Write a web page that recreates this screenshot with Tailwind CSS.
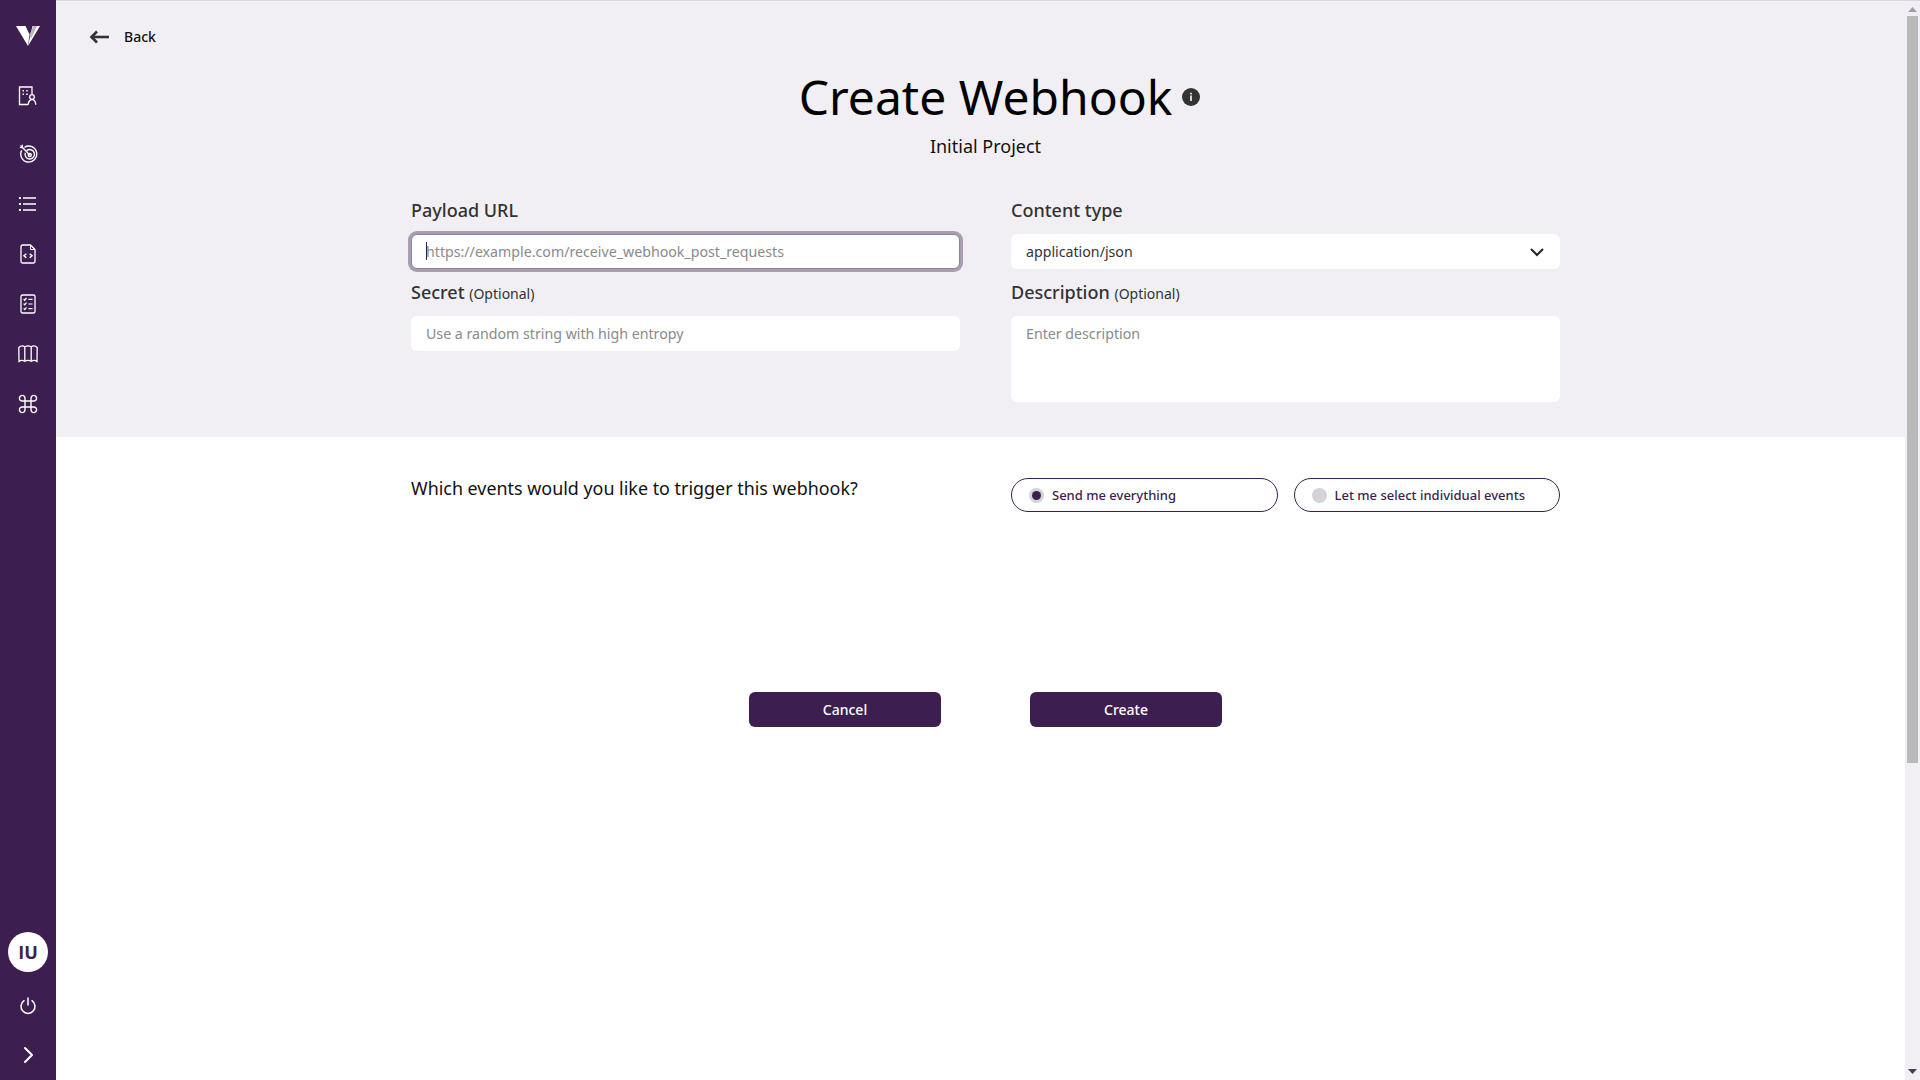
<!DOCTYPE html>
<html lang="en">
<head>
  <meta charset="UTF-8" />
  <title>Create Webhook</title>
  <script src="https://cdn.jsdelivr.net/npm/@tailwindcss/browser@4"></script>
</head>
<body class="h-screen overflow-hidden bg-white font-['Noto_Sans',sans-serif] text-[#111]">
  <div class="flex h-[1080px]">

    <!-- Sidebar -->
    <aside class="w-14 shrink-0 bg-[#3c1f50] flex flex-col items-center text-white">
      <svg class="mt-[26px] w-6 h-5" viewBox="0 0 24 20">
        <path d="M0 0H9.500L13.500 8.500L12 20Z" fill="#fff" />
        <path d="M12 20L16.500 0H24Z" fill="#fff" />
        <path d="M13.500 8.500L17.500 0H21L15.200 12.500Z" fill="#b9b4bc" />
      </svg>
      <nav class="mt-[25px] flex flex-col items-center">
        <!-- org -->
        <a class="h-[50px] flex items-center justify-center">
          <svg class="w-5 h-5" viewBox="0 0 20 20" fill="none" stroke="currentColor" stroke-width="1.300">
            <path d="M10 18.500H1.500V1H14V8" />
            <path d="M4.500 4.800h1.500M8.200 4.800h1.500M4.500 8.200h1.500M8.200 8.200h1.500" stroke-width="1.600" />
            <circle cx="14" cy="11" r="2.300" />
            <path d="M10.300 18.800c0-3.200 1.500-5.200 3.700-5.200s3.700 2 3.700 5.200" />
          </svg>
        </a>
        <!-- target -->
        <a class="mt-2 h-[50px] flex items-center justify-center">
          <svg class="w-5 h-5 ml-0.5" viewBox="0 0 20 20" fill="none" stroke="currentColor" stroke-width="1.400">
            <path d="M5.500 3.300a8 8 0 1 1-2.800 3" />
            <path d="M7.600 6.800a4.700 4.700 0 1 1-1.300 2" />
            <circle cx="10.800" cy="11" r="1.500" />
            <path d="M10.800 11L1.500 1.500" />
            <path d="M0.800 3.500L3.500 3.600L3.400 0.800" stroke-width="1.100" />
          </svg>
        </a>
        <!-- list -->
        <a class="h-[50px] flex items-center justify-center">
          <svg class="w-5 h-5" viewBox="0 0 20 20" fill="none" stroke="currentColor" stroke-width="1.300">
            <path d="M5 4h13M5 10h13M5 16h13" />
            <path d="M1 4h2M1 10h2M1 16h2" stroke-width="2" />
          </svg>
        </a>
        <!-- code file -->
        <a class="h-[50px] flex items-center justify-center">
          <svg class="w-5 h-5" viewBox="0 0 20 20" fill="none" stroke="currentColor" stroke-width="1.300">
            <path d="M12.500 1H4.500a1.500 1.500 0 0 0-1.500 1.500v15a1.500 1.500 0 0 0 1.500 1.500h11a1.500 1.500 0 0 0 1.500-1.500V5.500z" />
            <path d="M12.500 1v4.500h4.500" stroke-width="1" />
            <path d="M8.300 9.800L6 11.800L8.300 13.800M11.700 9.800L14 11.800L11.700 13.800" stroke-width="1.500" />
          </svg>
        </a>
        <!-- checklist -->
        <a class="h-[50px] flex items-center justify-center">
          <svg class="w-5 h-5" viewBox="0 0 20 20" fill="none" stroke="currentColor" stroke-width="1.300">
            <rect x="3" y="1" width="14" height="18" rx="1.500" />
            <path d="M5.700 5l1 1.200L8.500 4M5.700 9.700l1 1.200L8.500 8.700M5.700 14.400l1 1.200L8.500 13.400" stroke-width="1.200" />
            <path d="M10.500 5.300h4M10.500 10h4M10.500 14.700h4" stroke-width="1.200" />
          </svg>
        </a>
        <!-- map -->
        <a class="h-[50px] flex items-center justify-center">
          <svg class="w-5 h-5" viewBox="0 0 20 20" fill="none" stroke="currentColor" stroke-width="1.300">
            <path d="M0.800 3.500Q3.500 0.800 6.800 2.800Q10 0.800 13.200 2.800Q16.500 0.800 19.200 3.500L19 17.500Q16.500 15.500 13.200 17.300Q10 15.500 6.800 17.300Q3.500 15.500 1 17.500Z" />
            <path d="M6.800 2.800V17.300M13.200 2.800V17.300" />
          </svg>
        </a>
        <!-- command -->
        <a class="h-[50px] flex items-center justify-center">
          <svg class="w-5 h-5" viewBox="0 0 20 20" fill="none" stroke="currentColor" stroke-width="1.400">
            <path d="M7 7V4.300A2.800 2.800 0 1 0 4.200 7H15.800A2.800 2.800 0 1 0 13 4.300V15.700A2.800 2.800 0 1 0 15.800 13H4.200A2.800 2.800 0 1 0 7 15.700Z" />
          </svg>
        </a>
      </nav>

      <div class="mt-auto w-10 h-10 rounded-full bg-white text-[#3c1f50] flex items-center justify-center text-lg font-bold font-['Open_Sans',sans-serif]">IU</div>
      <a class="mt-[9px] h-[50px] flex items-center justify-center">
        <svg class="w-5 h-5" viewBox="0 0 20 20" fill="none" stroke="currentColor" stroke-width="1.500" stroke-linecap="round">
          <path d="M10 2V9" />
          <path d="M6 4.700a7 7 0 1 0 8 0" />
        </svg>
      </a>
      <a class="h-12 mb-px flex items-center justify-center">
        <svg class="w-5 h-5" viewBox="0 0 20 20" fill="none" stroke="currentColor" stroke-width="2" stroke-linecap="round" stroke-linejoin="round">
          <path d="M7 3l7 7l-7 7" />
        </svg>
      </a>
    </aside>

    <!-- Main -->
    <main class="flex-1 min-w-0 flex flex-col">
      <section class="bg-[#f1eff3] h-[437px] border-t border-[#d9d9d9]">
        <a class="ml-[33px] mt-[26px] h-5 flex items-center w-fit text-sm font-medium">
          <svg class="w-5 h-4" viewBox="0 0 20 16" fill="none" stroke="#333" stroke-width="2.600">
            <path d="M20 8H2" />
            <path d="M8 2.500L2.500 8L8 13.500" />
          </svg>
          <span class="ml-[15px]">Back</span>
        </a>

        <div class="ml-[355px] w-[1149px]">
          <div class="mt-[18px] flex justify-center">
            <h1 class="relative text-5xl leading-16 font-normal text-black">
              Create Webhook
              <svg class="absolute left-[calc(100%+10px)] top-[23px] w-[18px] h-[18px]" viewBox="0 0 18 18">
                <circle cx="9" cy="9" r="9" fill="#333" />
                <rect x="8.200" y="7.500" width="1.600" height="5.500" fill="#fff" />
                <rect x="8.200" y="4.800" width="1.600" height="1.600" fill="#fff" />
              </svg>
            </h1>
          </div>
          <p class="mt-[3px] text-center text-lg leading-7">Initial Project</p>

          <form class="mt-[38px] grid grid-cols-2 gap-x-[51px] gap-y-[11px]">
            <div>
              <label class="block h-6 mb-3 text-lg leading-6 font-medium text-[#333]">Payload URL</label>
              <div class="relative">
                <input class="block w-full h-[35px] px-[14px] bg-white rounded-md border border-[#8f8299] text-[14.2px] ring-[3px] ring-[#a99eb0] outline-none placeholder:text-[#8a8a8a]" placeholder="https://example.com/receive_webhook_post_requests" />
                <span class="absolute left-[15px] top-2 w-px h-[18px] bg-[#2a2040]"></span>
              </div>
            </div>
            <div>
              <label class="block h-6 mb-3 text-lg leading-6 font-medium text-[#333]">Content type</label>
              <div class="h-[35px] px-[15px] bg-white rounded-md text-[14.2px] flex items-center justify-between text-[#333]">
                <span>application/json</span>
                <svg class="w-4 h-4" viewBox="0 0 16 16" fill="none" stroke="#222" stroke-width="2">
                  <path d="M2 5l6 6l6-6" />
                </svg>
              </div>
            </div>
            <div>
              <label class="block h-6 mb-3 text-lg leading-6 font-medium text-[#333]">Secret <span class="text-sm font-normal">(Optional)</span></label>
              <input class="block w-full h-[35px] px-[15px] bg-white rounded-md text-[14.2px] outline-none placeholder:text-[#8a8a8a]" placeholder="Use a random string with high entropy" />
            </div>
            <div>
              <label class="block h-6 mb-3 text-lg leading-6 font-medium text-[#333]">Description <span class="text-sm font-normal">(Optional)</span></label>
              <textarea class="block w-full h-[86px] px-[15px] py-[7px] bg-white rounded-md text-[14.2px] resize-none outline-none placeholder:text-[#8a8a8a]" placeholder="Enter description"></textarea>
            </div>
          </form>
        </div>
      </section>

      <section class="ml-[355px] w-[1149px]">
        <div class="mt-[39px] grid grid-cols-2 gap-x-[51px]">
          <p class="text-[17.9px] leading-6">Which events would you like to trigger this webhook?</p>
          <div class="mt-0.5 flex gap-4">
            <label class="flex-1 h-[34px] pl-[17px] border border-[#3c1f50] rounded-full flex items-center gap-2 text-[13px] font-medium text-[#3c1f50]">
              <span class="w-[15px] h-[15px] rounded-full bg-[#d5d2d8] flex items-center justify-center"><span class="w-[9px] h-[9px] rounded-full bg-[#3c1f50]"></span></span>
              <span class="mt-px">Send me everything</span>
            </label>
            <label class="flex-1 h-[34px] pl-[17px] border border-[#3c1f50] rounded-full flex items-center gap-2 text-[13px] font-medium text-[#3c1f50]">
              <span class="w-[15px] h-[15px] rounded-full bg-[#d5d2d8]"></span>
              <span class="mt-px">Let me select individual events</span>
            </label>
          </div>
        </div>

        <div class="mt-[180px] flex justify-center gap-[89px]">
          <button class="w-48 h-[35px] rounded-md bg-[#3c1f50] text-white text-sm font-medium">Cancel</button>
          <button class="w-48 h-[35px] rounded-md bg-[#3c1f50] text-white text-sm font-medium">Create</button>
        </div>
      </section>
    </main>

    <!-- Scrollbar -->
    <div class="w-[15px] shrink-0 bg-[#f1eff3] border-t border-[#d9d9d9] flex flex-col items-center">
      <svg class="mt-[6px] w-[9px] h-[5px]" viewBox="0 0 9 5"><path d="M4.500 0L9 5H0Z" fill="#a89ab2" /></svg>
      <div class="mt-1 w-[11px] h-[747px] bg-[#b9b9b9]"></div>
      <svg class="mt-auto mb-[6px] w-[9px] h-[5px]" viewBox="0 0 9 5"><path d="M0 0H9L4.500 5Z" fill="#4a3a55" /></svg>
    </div>
  </div>
</body>
</html>
